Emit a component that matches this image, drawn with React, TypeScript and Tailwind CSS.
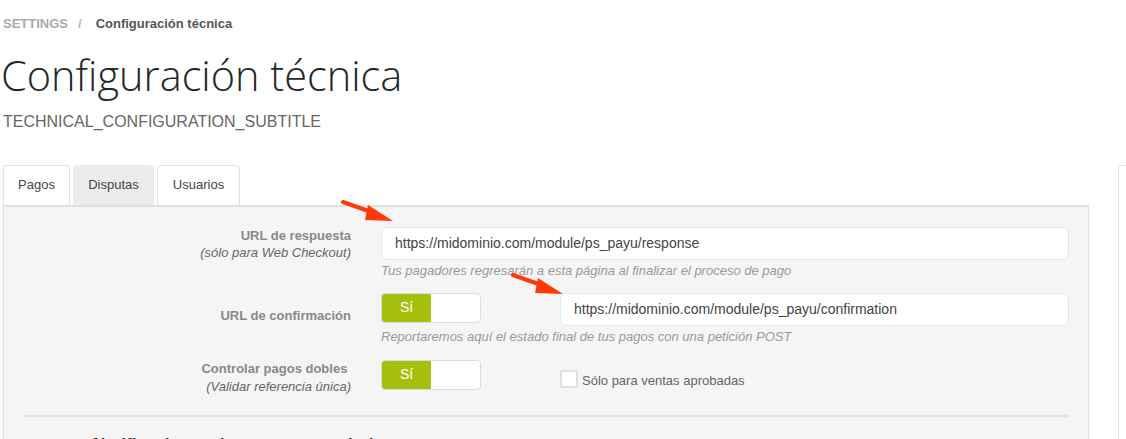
import React from "react";

const sans = { fontFamily: '"Liberation Sans", Arial, sans-serif' };

function Toggle() {
  return (
    <div className="flex h-[30px] w-[100px] overflow-hidden rounded-[4px] border border-[#dcdcdc] bg-white">
      <div className="flex w-[49px] items-center justify-center bg-[#a6bf0c] text-[14px] text-white">Sí</div>
      <div className="flex-1" />
    </div>
  );
}

function Arrow({ className }: { className: string }) {
  return (
    <svg className={className} viewBox="0 0 54 24" width="54" height="24">
      <line x1="2" y1="3" x2="36" y2="15" stroke="#ff3a0a" strokeWidth="4" strokeLinecap="round" />
      <polygon points="27,6 52,22 24,21" fill="#ff3a0a" />
    </svg>
  );
}

export default function App() {
  return (
    <div className="relative h-[439px] w-[1126px] overflow-hidden bg-white text-[#555]" style={sans}>
      {/* Breadcrumb */}
      <div className="flex items-center gap-[10px] pl-[3px] pt-[14px] text-[13px] font-bold">
        <span className="text-[#aaa]">SETTINGS</span>
        <span className="text-[#bbb]">/</span>
        <span className="pl-[4px] text-[#555]">Configuración técnica</span>
      </div>

      {/* Title */}
      <h1
        className="mt-[16px] pl-[1px] text-[41.5px] font-light leading-[50px] text-[#25282b]"
        style={{ fontFamily: '"Open Sans", sans-serif' }}
      >
        Configuración técnica
      </h1>
      <div className="mt-[10px] pl-[3px] text-[16px] text-[#666]">TECHNICAL_CONFIGURATION_SUBTITLE</div>

      <div className="mt-[31px] flex">
        <div className="w-[1089px] pl-[3px]">
          {/* Tabs */}
          <div className="flex h-[40px] gap-[3px] text-[13px]">
            <div className="flex w-[67px] items-center justify-center rounded-t-[4px] border border-b-0 border-[#e4e4e4] bg-white text-[#444]">Pagos</div>
            <div className="flex w-[81px] items-center justify-center rounded-t-[4px] bg-[#ececec] text-[#444]">Disputas</div>
            <div className="flex w-[83px] items-center justify-center rounded-t-[4px] border border-b-0 border-[#e4e4e4] bg-white text-[#444]">Usuarios</div>
          </div>

          {/* Panel */}
          <div className="h-[300px] border border-t-2 border-[#e0e0e0] bg-[#f5f5f5] px-[19px] pt-[20px]">
            {/* Row 1 */}
            <div className="flex">
              <div className="w-[358px] pr-[30px] text-right text-[13px] leading-[17px]">
                <div className="font-bold text-[#888]">URL de respuesta</div>
                <div className="italic text-[#666]">(sólo para Web Checkout)</div>
              </div>
              <div className="flex-1">
                <div className="flex h-[33px] items-center rounded-[6px] border border-[#e6e6e6] bg-white px-[13px] text-[14px] text-[#444]">
                  https://midominio.com/module/ps_payu/response
                </div>
                <div className="mt-[2px] text-[13px] italic leading-[17px] text-[#999]">
                  Tus pagadores regresarán a esta página al finalizar el proceso de pago
                </div>
              </div>
            </div>

            {/* Row 2 */}
            <div className="mt-[14px] flex">
              <div className="flex h-[46px] w-[358px] items-center justify-end pr-[30px] text-[13px] font-bold text-[#888]">
                URL de confirmación
              </div>
              <div className="flex-1">
                <div className="flex items-start">
                  <Toggle />
                  <div className="ml-[79px] flex h-[33px] flex-1 items-center rounded-[6px] border border-[#e6e6e6] bg-white px-[13px] text-[14px] text-[#444]">
                    https://midominio.com/module/ps_payu/confirmation
                  </div>
                </div>
                <div className="mt-[2px] text-[13px] italic leading-[17px] text-[#999]">
                  Reportaremos aquí el estado final de tus pagos con una petición POST
                </div>
              </div>
            </div>

            {/* Row 3 */}
            <div className="mt-[15px] flex">
              <div className="w-[358px] pr-[30px] text-right text-[13px] leading-[18px]">
                <div className="font-bold text-[#888]">Controlar pagos dobles&nbsp;</div>
                <div className="italic text-[#666]">(Validar referencia única)</div>
              </div>
              <div className="flex flex-1 items-start">
                <Toggle />
                <div className="ml-[79px] mt-[8px] flex items-center gap-[4px] text-[13px] text-[#666]">
                  <div className="h-[18px] w-[18px] rounded-[2px] border-2 border-[#e0e0e0] bg-white" />
                  <span className="mt-[3px]">Sólo para ventas aprobadas</span>
                </div>
              </div>
            </div>

            <div className="mt-[19px] h-[2px] bg-[#e4e4e4]" />

            <div className="mt-[15px] pl-[70px] text-[17px] font-bold text-[#333]">
              Notificaciones de pagos y reembolsos
            </div>
          </div>
        </div>

        {/* Right side panel */}
        <div className="ml-[29px] h-[300px] flex-1 border-l border-t border-[#e6e6e6] bg-white" />
      </div>

      {/* Annotation arrows */}
      <Arrow className="absolute left-[341px] top-[199px]" />
      <Arrow className="absolute left-[511px] top-[272px]" />
    </div>
  );
}
